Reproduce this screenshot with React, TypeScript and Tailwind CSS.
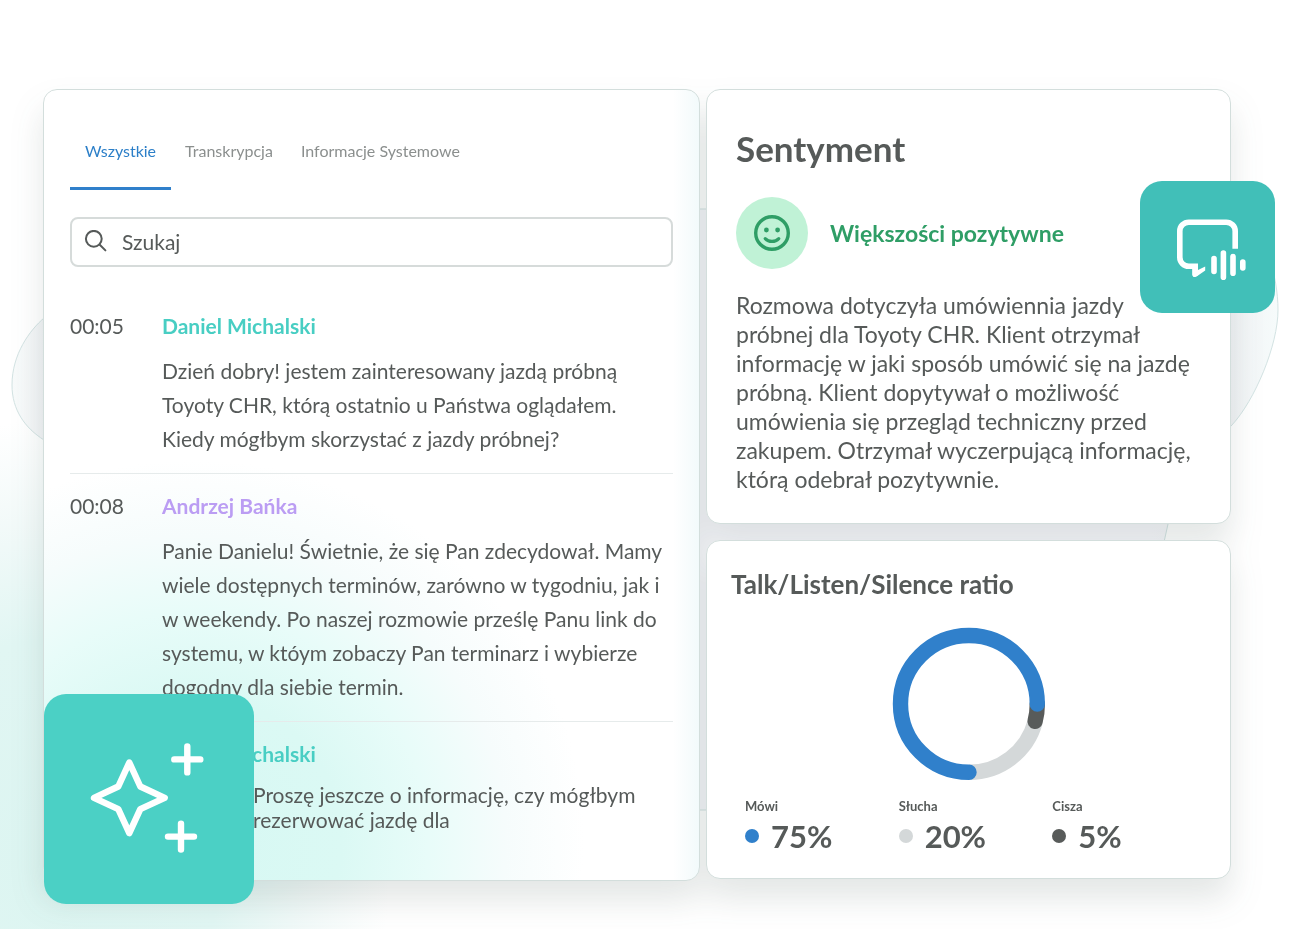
import React from 'react';

type Entry = { time?: string; name: string; nameClass: string; lines: string[] };

const entries: Entry[] = [
  {
    time: '00:05',
    name: 'Daniel Michalski',
    nameClass: 'text-[#48cec3]',
    lines: [
      'Dzień dobry! jestem zainteresowany jazdą próbną',
      'Toyoty CHR, którą ostatnio u Państwa oglądałem.',
      'Kiedy mógłbym skorzystać z jazdy próbnej?',
    ],
  },
  {
    time: '00:08',
    name: 'Andrzej Bańka',
    nameClass: 'text-[#bb9df3]',
    lines: [
      'Panie Danielu! Świetnie, że się Pan zdecydował. Mamy',
      'wiele dostępnych terminów, zarówno w tygodniu, jak i',
      'w weekendy. Po naszej rozmowie prześlę Panu link do',
      'systemu, w któym zobaczy Pan terminarz i wybierze',
      'dogodny dla siebie termin.',
    ],
  },
];

const tabs = ['Wszystkie', 'Transkrypcja', 'Informacje Systemowe'];

const summary = [
  'Rozmowa dotyczyła umówiennia jazdy',
  'próbnej dla Toyoty CHR. Klient otrzymał',
  'informację w jaki sposób umówić się na jazdę',
  'próbną. Klient dopytywał o możliwość',
  'umówienia się przegląd techniczny przed',
  'zakupem. Otrzymał wyczerpującą informację,',
  'którą odebrał pozytywnie.',
];

const ratios = [
  { label: 'Mówi', value: '75%', dot: 'bg-[#3080cb]' },
  { label: 'Słucha', value: '20%', dot: 'bg-[#d4d8d9]' },
  { label: 'Cisza', value: '5%', dot: 'bg-[#585b5a]' },
];

function Lines({ lines }: { lines: string[] }) {
  return (
    <>
      {lines.map((line) => (
        <span key={line} className="block whitespace-nowrap">
          {line}
        </span>
      ))}
    </>
  );
}

function Backdrop() {
  return (
    <div aria-hidden="true" className="pointer-events-none absolute inset-0">
      <div className="absolute inset-0 bg-[radial-gradient(ellipse_340px_440px_at_50px_860px,#dcf5f1_0%,#e1f6f3_50%,rgba(238,248,247,0.8)_75%,rgba(255,255,255,0)_100%)]" />
      <svg className="absolute top-0 left-0" width="1300" height="929" viewBox="0 0 1300 929" fill="none">
        <defs>
          <linearGradient id="blob" x1="12" y1="0" x2="1278" y2="0" gradientUnits="userSpaceOnUse">
            <stop offset="0" stopColor="#f8fbfb" />
            <stop offset="0.026" stopColor="#f1f3f5" />
            <stop offset="0.1" stopColor="#f8f8fc" />
            <stop offset="0.9" stopColor="#f8f8fc" />
            <stop offset="0.965" stopColor="#f1f3f5" />
            <stop offset="1" stopColor="#f6fbfb" />
          </linearGradient>
        </defs>
        <path
          d="M12 385C12 354 30 330 44 318L200 209H1240C1265 235 1278 275 1278 310C1278 345 1255 400 1232 425C1200 458 1176 490 1168 524L1160 560L1100 810H600L44 440C25 428 12 410 12 385Z"
          fill="url(#blob)"
          stroke="#d3e3e3"
        />
      </svg>
    </div>
  );
}

function SearchIcon() {
  return (
    <svg width="24" height="24" viewBox="0 0 24 24" fill="none" stroke="#565a59" strokeWidth="2" strokeLinecap="round" aria-hidden="true">
      <circle cx="9.8" cy="8.8" r="7.9" />
      <path d="M15.5 14.5L21.4 20.4" />
    </svg>
  );
}

function Donut() {
  return (
    <svg width="154" height="154" viewBox="-1 -1 154 154" fill="none" strokeWidth="15.4" role="img" aria-label="Talk/Listen/Silence ratio">
      <path d="M142.1 94A68.4 68.4 0 0 1 76 144.3" stroke="#d4d8d9" />
      <path d="M144.3 76A68.4 68.4 0 0 1 142.1 93.3" stroke="#585b5a" strokeLinecap="round" />
      <path d="M76 144.3A68.4 68.4 0 1 1 144.3 76" stroke="#3080cb" strokeLinecap="round" />
    </svg>
  );
}

function TranscriptCard() {
  return (
    <section className="rounded-[14px] border border-[#d3dedc] bg-white bg-[radial-gradient(ellipse_390px_380px_at_150px_750px,#d6f8f3_0%,#dbf9f4_38%,#e8fcf9_60%,#f6fcfc_80%,rgba(255,255,255,0)_100%),linear-gradient(to_left,#f2fafb_0,rgba(255,255,255,0)_26px)] px-[26px] pt-[35px] pb-12">
      <div role="tablist" className="flex text-base leading-6 text-[#8b8f8e]">
        {tabs.map((tab, i) => (
          <button
            key={tab}
            type="button"
            role="tab"
            aria-selected={i === 0}
            className={
              i === 0
                ? 'border-b-3 border-[#3080cb] px-[15px] pt-3.5 pb-6 text-[#2c7fc8]'
                : 'border-b-3 border-transparent px-3.5 pt-3.5 pb-6'
            }
          >
            {tab}
          </button>
        ))}
      </div>

      <label className="mt-[27px] flex h-[50px] items-center gap-3.5 rounded-lg border-2 border-[#d6dbda] bg-white px-3">
        <SearchIcon />
        <input
          type="text"
          aria-label="Szukaj"
          placeholder="Szukaj"
          className="min-w-0 flex-1 bg-transparent text-[21px] text-[#565a59] outline-none placeholder:text-[#565a59]"
        />
      </label>

      <ul className="mt-[27px]">
        {entries.map((e) => (
          <li key={e.time} className="flex border-b border-[#e6ebeb] py-[17px] text-[21px]">
            <time className="w-[92px] shrink-0 leading-[30px]">{e.time}</time>
            <div>
              <h3 className={`${e.nameClass} leading-[30px] font-bold`}>{e.name}</h3>
              <p className="mt-[13px] leading-[34px]">
                <Lines lines={e.lines} />
              </p>
            </div>
          </li>
        ))}
        <li className="pt-[17px] pl-[92px] text-[21px]">
          <h3 className="leading-[30px] font-bold text-[#48cec3]">Daniel Michalski</h3>
          <p className="mt-[13px] pl-[91px] leading-[25px]">
            <Lines lines={['Proszę jeszcze o informację, czy mógłbym', 'rezerwować jazdę dla']} />
          </p>
        </li>
      </ul>
    </section>
  );
}

function SentimentCard() {
  return (
    <section className="rounded-[14px] border border-[#d3dedc] bg-white px-[29px] pt-9 pb-[29px]">
      <h2 className="text-[35px] leading-[44px] font-bold">Sentyment</h2>
      <div className="mt-[27px] flex items-center gap-[22px]">
        <span className="flex size-[72px] items-center justify-center rounded-full bg-[#c0f2d6]">
          <svg width="38" height="38" viewBox="0 0 38 38" fill="none" stroke="#2f9e66" aria-hidden="true">
            <circle cx="19" cy="19" r="16.3" strokeWidth="3.4" />
            <path d="M12.2 24.6C15.8 28.4 22.2 28.4 25.8 24.6" strokeWidth="3.2" strokeLinecap="round" />
            <circle cx="13.4" cy="16" r="2.4" fill="#2f9e66" stroke="none" />
            <circle cx="24.6" cy="16" r="2.4" fill="#2f9e66" stroke="none" />
          </svg>
        </span>
        <strong className="text-[23px] leading-8 font-bold text-[#2f9e66]">Większości pozytywne</strong>
      </div>
      <p className="mt-[22px] text-[23px] leading-[29px]">
        <Lines lines={summary} />
      </p>
    </section>
  );
}

function RatioCard() {
  return (
    <section className="rounded-[14px] border border-[#d3dedc] bg-white px-6 pt-[27px] pb-[22px]">
      <h2 className="text-[26px] leading-8 font-bold">Talk/Listen/Silence ratio</h2>
      <div className="mt-[27px] flex justify-center">
        <Donut />
      </div>
      <dl className="mt-[15px] grid grid-cols-3 pl-[14px] font-bold">
        {ratios.map((r) => (
          <div key={r.label}>
            <dt className="text-[13px] leading-5">{r.label}</dt>
            <dd className="flex items-center gap-3 text-[31px] leading-10">
              <span className={`${r.dot} size-3.5 rounded-full`} />
              {r.value}
            </dd>
          </div>
        ))}
      </dl>
    </section>
  );
}

export default function App() {
  return (
    <main className="relative min-h-screen overflow-hidden bg-white pt-[89px] pr-[69px] pb-12 pl-[43px] font-[Lato,sans-serif] text-[#565a59]">
      <Backdrop />
      <div className="relative">
        <div className="grid grid-cols-[minmax(0,657fr)_minmax(0,525fr)] items-start gap-[6px] drop-shadow-[0_20px_16px_rgba(50,70,65,0.13)]">
          <TranscriptCard />
          <div className="flex flex-col gap-4">
            <SentimentCard />
            <RatioCard />
          </div>
        </div>

        <div className="absolute bottom-[-23px] left-px size-[210px] rounded-[22px] bg-[#4bd0c5]">
          <svg width="210" height="210" viewBox="0 0 210 210" fill="none" stroke="#fff" strokeWidth="6.4" strokeLinecap="round" strokeLinejoin="round" aria-hidden="true">
            <path d="M85.3 68.5L96.3 92.5L120.7 103.9L96.3 115.1L85.3 139.2L74.3 115.1L50 103.9L74.3 92.5Z" />
            <path d="M143.3 52.4V78.4M130.3 65.4H156.3M137 129.6V155.6M124 142.6H150" />
          </svg>
        </div>

        <div className="absolute top-[92px] right-[-44px] h-[132px] w-[135px] rounded-[22px] bg-[#41bfb8]">
          <svg width="135" height="132" viewBox="0 0 135 132" fill="none" stroke="#fff" strokeWidth="5.6" aria-hidden="true">
            <path d="M95.2 67.8V50.2a9 9 0 0 0-9-9H48.8a9 9 0 0 0-9 9V76.3a9 9 0 0 0 9 9H55.2V94.4" />
            <path d="M52.4 84H58V89L65.2 85.6V89.6L56.6 95.4Q52.4 97.6 52.4 93Z" fill="#fff" stroke="none" />
            <path d="M74 77.6V90.5M83.4 72V96.2M93 75.6V92.2M102.8 81V87" strokeLinecap="round" />
          </svg>
        </div>
      </div>
    </main>
  );
}
